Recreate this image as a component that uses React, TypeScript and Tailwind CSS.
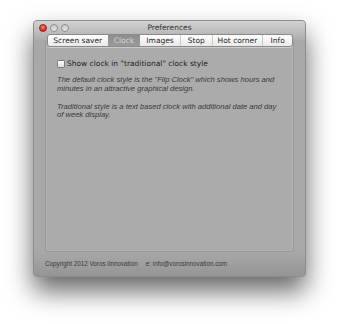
export default function App() {
  const tabs = ["Screen saver", "Clock", "Images", "Stop", "Hot corner", "Info"];
  const widths = ["w-[60px]", "w-[33px]", "w-[40px]", "w-[32px]", "w-[51px]", "w-[30px]"];
  return (
    <div className="w-[340px] h-[324px] bg-white pl-[33px] pt-[20px]">
      <div className="w-[273px] h-[257px] flex flex-col rounded-[4px] bg-[#a8a8a8] shadow-[0_14px_26px_rgba(0,0,0,0.6)] border border-[#8c8c8c] overflow-hidden">
        {/* title bar */}
        <div className="relative h-[19px] bg-gradient-to-b from-[#d2d2d2] to-[#adadad] flex items-start justify-center pt-[1px]">
          <div className="absolute left-[5px] top-[3px] flex gap-[3px]">
            <span className="w-[8px] h-[8px] rounded-full bg-[radial-gradient(circle_at_50%_35%,#ff8a80,#d2261c_70%)] border border-[#9a2018]" />
            <span className="w-[8px] h-[8px] rounded-full bg-gradient-to-b from-[#c8c8c8] to-[#e6e6e6] border border-[#8e8e8e]" />
            <span className="w-[8px] h-[8px] rounded-full bg-gradient-to-b from-[#c8c8c8] to-[#e6e6e6] border border-[#8e8e8e]" />
          </div>
          <span className="text-[7.5px] leading-[12px] text-[#333] font-['DejaVu_Sans',sans-serif]">Preferences</span>
        </div>
        {/* body */}
        <div className="relative flex-1 flex flex-col px-[11px]">
          <div className="relative z-10 -mt-[6px] ml-[2px] flex w-[246px] h-[13px] rounded-[3px] border border-[#8a8a8a] bg-gradient-to-b from-[#ffffff] to-[#e9e9e9] overflow-hidden shadow-[0_1px_0_rgba(255,255,255,0.4)]">
            {tabs.map((t, i) => (
              <div
                key={t}
                className={
                  widths[i] +
                  " flex items-center justify-center text-[7.5px] font-['DejaVu_Sans',sans-serif] " +
                  (i === 1
                    ? "bg-gradient-to-b from-[#8d8d8d] to-[#9b9b9b] text-[#d6d6d6]"
                    : "text-[#1e1e1e] " + (i > 0 && i !== 2 ? "border-l border-[#c9c9c9]" : ""))
                }
              >
                {t}
              </div>
            ))}
          </div>
          <div className="-mt-[7px] h-[212px] rounded-[3px] border border-[#9a9a9a] bg-[#ababab] shadow-[inset_0_0_0_1px_rgba(255,255,255,0.08)] pt-[18px] pl-[11px] pr-[12px]">
            <div className="flex items-center gap-[2px]">
              <span className="w-[8px] h-[8px] rounded-[1.5px] border border-[#7a7a7a] bg-gradient-to-b from-[#ffffff] to-[#dedede]" />
              <span className="text-[7.5px] text-[#1e1e1e] font-['DejaVu_Sans',sans-serif] leading-[10px]">Show clock in "traditional" clock style</span>
            </div>
            <p className="mt-[7px] text-[7.6px] italic leading-[8.8px] text-[#3a3a3a] font-['Liberation_Sans',sans-serif]">
              The default clock style is the "Flip Clock" which shows hours and minutes in an attractive graphical design.
            </p>
            <p className="mt-[9px] text-[7.6px] italic leading-[8.8px] text-[#3a3a3a] font-['Liberation_Sans',sans-serif]">
              Traditional style is a text based clock with additional date and day of week display.
            </p>
          </div>
          <div className="flex-1 -mx-[11px] px-[11px] pt-[7px] bg-gradient-to-b from-[#a8a8a8] to-[#959595] flex gap-[8px] text-[6.3px] text-[#3a3a3a] font-['Liberation_Sans',sans-serif]">
            <span>Copyright 2012 Voros iInnovation</span>
            <span>e: info@vorosinnovation.com</span>
          </div>
        </div>
      </div>
    </div>
  );
}
